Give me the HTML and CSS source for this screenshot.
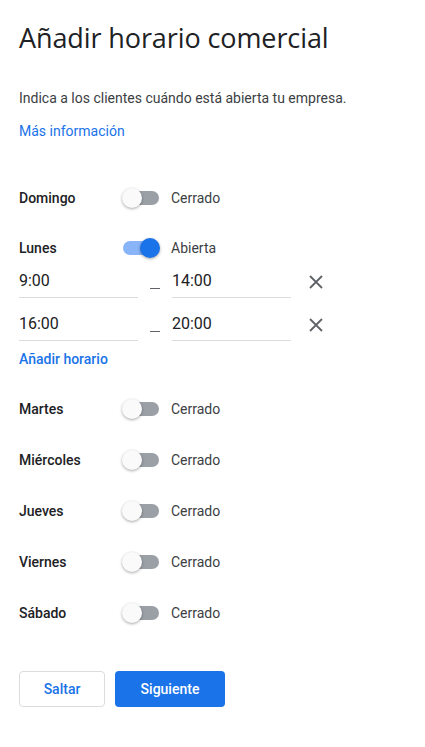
FILE: index.html
```html
<!DOCTYPE html>
<html lang="es">
	<head>
		<meta charset="utf-8">
		<title>Añadir horario comercial</title>
		<meta name="viewport" content="width=device-width, initial-scale=1.0">
		<link rel="stylesheet" href="styles.css">
	</head>
	<body>

		<h1>Añadir horario comercial</h1>

		<p class="intro">Indica a los clientes cuándo está abierta tu empresa.</p>
		<a class="link more" href="#">Más información</a>

		<div class="days">
			<div class="day day-first">
				<span class="day-name">Domingo</span>
				<span class="switch"></span>
				<span class="state">Cerrado</span>
			</div>

			<div class="day day-open">
				<span class="day-name">Lunes</span>
				<span class="switch on"></span>
				<span class="state">Abierta</span>
			</div>
			<div class="slots">
				<div class="slot">
					<span class="time">9:00</span>
					<span class="dash"></span>
					<span class="time">14:00</span>
					<svg class="remove" width="24" height="24" viewBox="0 0 24 24"><path d="M6 6l12 12M18 6L6 18" stroke="#5f6368" stroke-width="1.8" fill="none"/></svg>
				</div>
				<div class="slot">
					<span class="time">16:00</span>
					<span class="dash"></span>
					<span class="time">20:00</span>
					<svg class="remove" width="24" height="24" viewBox="0 0 24 24"><path d="M6 6l12 12M18 6L6 18" stroke="#5f6368" stroke-width="1.8" fill="none"/></svg>
				</div>
				<a class="link add" href="#">Añadir horario</a>
			</div>

			<div class="day">
				<span class="day-name">Martes</span>
				<span class="switch"></span>
				<span class="state">Cerrado</span>
			</div>
			<div class="day">
				<span class="day-name">Miércoles</span>
				<span class="switch"></span>
				<span class="state">Cerrado</span>
			</div>
			<div class="day">
				<span class="day-name">Jueves</span>
				<span class="switch"></span>
				<span class="state">Cerrado</span>
			</div>
			<div class="day">
				<span class="day-name">Viernes</span>
				<span class="switch"></span>
				<span class="state">Cerrado</span>
			</div>
			<div class="day">
				<span class="day-name">Sábado</span>
				<span class="switch"></span>
				<span class="state">Cerrado</span>
			</div>
		</div>

		<div class="actions">
			<button class="btn btn-outline">Saltar</button>
			<button class="btn btn-primary">Siguiente</button>
		</div>

	</body>
</html>
```

FILE: styles.css
```css
body {
	margin: 0;
	padding: 0 19px;
	font-family: Roboto, "Liberation Sans", sans-serif;
	font-size: 14px;
	color: #3c4043;
	background: #fff;
}

h1 {
	margin: 22px 0 0;
	font-family: "Open Sans", Roboto, sans-serif;
	font-weight: 400;
	font-size: 27px;
	line-height: 32px;
	color: #202124;
	letter-spacing: -0.1px;
}

.intro {
	margin: 34px 0 0;
	line-height: 20px;
}

.link {
	color: #1a73e8;
	text-decoration: none;
}

.more {
	display: block;
	margin-top: 13px;
	line-height: 20px;
}

.days {
	margin-top: 47px;
}

.day {
	display: flex;
	align-items: center;
	height: 20px;
	margin-bottom: 31px;
}

.day-first {
	margin-bottom: 30px;
}

.day-open {
	margin-bottom: 8px;
}

.day-name {
	width: 104px;
	font-weight: 500;
	color: #202124;
}

.switch {
	position: relative;
	width: 36px;
	height: 14px;
	margin-right: 12px;
	border-radius: 7px;
	background: #9aa0a6;
}

.switch::after {
	content: "";
	position: absolute;
	left: -1px;
	top: -3px;
	width: 20px;
	height: 20px;
	border-radius: 50%;
	background: #fafafa;
	box-shadow: 0 1px 3px rgba(0, 0, 0, 0.35);
}

.switch.on {
	background: #8ab4f8;
}

.switch.on::after {
	left: 17px;
	background: #1a73e8;
}

.state {
	color: #3c4043;
}

.slots {
	margin-bottom: 30px;
}

.slot {
	display: flex;
	align-items: center;
	height: 32px;
	margin-bottom: 11px;
}

.time {
	width: 119px;
	height: 31px;
	line-height: 30px;
	border-bottom: 1px solid #dadce0;
	font-size: 16px;
	color: #202124;
}

.dash {
	width: 10px;
	height: 1px;
	margin: 12px 12px 0;
	background: #5f6368;
}

.remove {
	margin-left: 13px;
}

.add {
	display: block;
	font-weight: 500;
	line-height: 20px;
	margin-top: -3px;
}

.actions {
	display: flex;
	gap: 10px;
	margin-top: 48px;
}

.btn {
	height: 36px;
	border-radius: 4px;
	font-family: Roboto, "Liberation Sans", sans-serif;
	font-size: 14px;
	font-weight: 500;
	cursor: pointer;
}

.btn-outline {
	width: 86px;
	background: #fff;
	border: 1px solid #dadce0;
	color: #1a73e8;
}

.btn-primary {
	width: 110px;
	background: #1a73e8;
	border: none;
	color: #fff;
}
```
